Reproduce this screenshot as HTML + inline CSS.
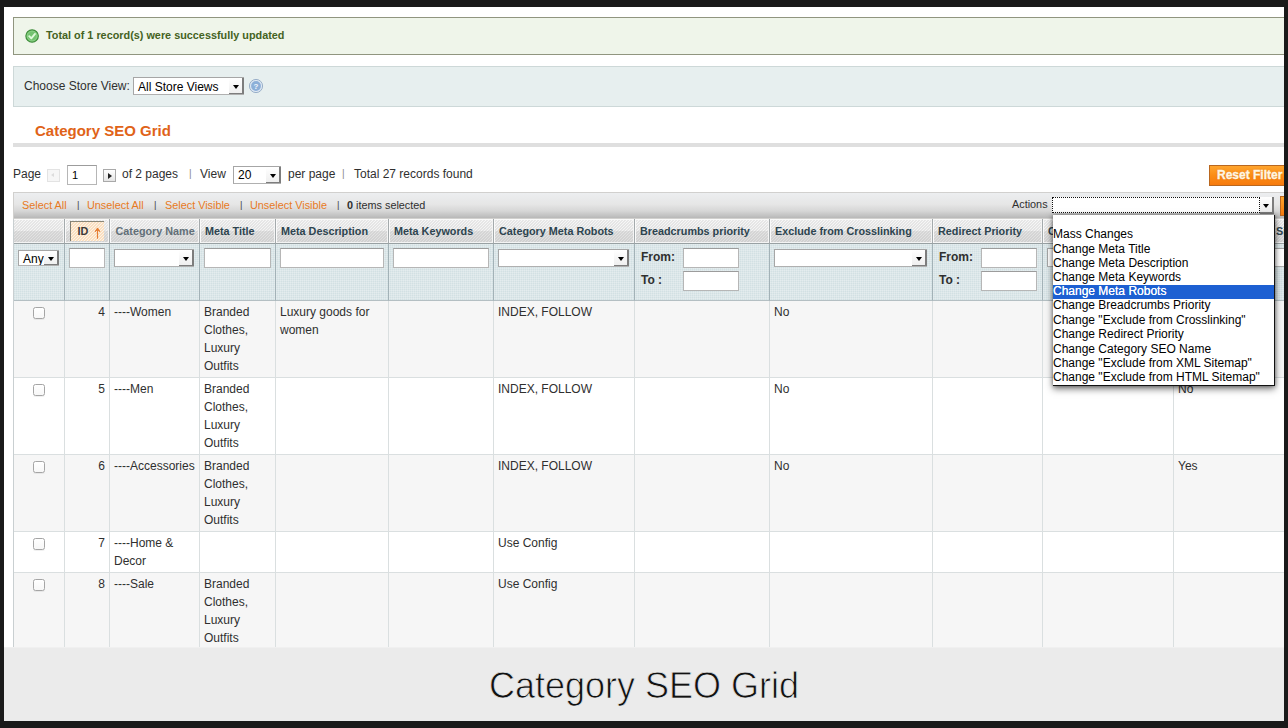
<!DOCTYPE html>
<html lang="en">
<head>
<meta charset="utf-8">
<title>Category SEO Grid</title>
<style>
*{box-sizing:border-box;}
html,body{margin:0;padding:0;}
body{width:1288px;height:728px;overflow:hidden;background:#1a1a1a;position:relative;font-family:"Liberation Sans",sans-serif;font-size:12px;color:#2f2f2f;line-height:18px;}
#page{position:absolute;left:4px;top:7px;width:1280px;height:714px;background:#fff;overflow:hidden;}
/* everything inside #inner uses full-page coordinates */
#inner{position:absolute;left:-4px;top:-7px;width:1400px;height:728px;}
.abs{position:absolute;white-space:nowrap;}
/* message */
#msg{left:13px;top:17px;width:1380px;height:38px;border:1px solid #90957f;background:#eff5ea;}
#msg .txt{left:32px;top:8px;font-weight:bold;font-size:10.85px;color:#446222;line-height:18px;}
/* store switcher */
#store{left:13px;top:66px;width:1380px;height:41px;border:1px solid #cdd8d8;background:#e7efef;}
.sel{position:absolute;background:#fff;border:1px solid #a6a6a6;border-right:0;border-bottom-color:#b0b0b0;font-size:12px;line-height:17px;color:#000;padding-left:4px;white-space:nowrap;overflow:hidden;}
.sel i{position:absolute;right:0;top:0;bottom:-1px;width:15px;background:linear-gradient(#ffffff,#efefef);border-right:2px solid #7d7d7d;border-bottom:2px solid #7d7d7d;}
.sel i:after{content:"";position:absolute;left:4px;top:50%;margin-top:-1px;border:3px solid transparent;border-top:4px solid #000;border-bottom:0;}
.inp{position:absolute;background:#fff;border:1px solid #b6b6b6;border-top-color:#9c9c9c;}
/* heading */
#h3{left:35px;top:121px;font-weight:bold;font-size:15px;color:#e06318;line-height:20px;}
#hr{left:13px;top:143px;width:1380px;height:4px;background:#dfdfdf;}
/* pager */
.pg{top:165px;line-height:18px;font-size:12px;color:#2f2f2f;}
.sep{color:#8a8a8a;font-size:10px;margin-top:0px;padding-left:1px;}
#reset{left:1209px;top:165px;width:90px;height:21px;border:1px solid #b9671f;background:linear-gradient(#ffa52e 0,#fb8d16 50%,#f67a0d 100%);color:#fff6e2;font-weight:bold;font-size:12px;line-height:18px;padding-left:7px;-webkit-text-stroke:.35px #fff6e2;text-shadow:0 0 2px rgba(200,90,0,.55);}
/* massaction */
#mass{left:13px;top:192px;width:1380px;height:27px;border:1px solid #d1d0ce;background:linear-gradient(#eceef0 0,#e6e6e6 45%,#d6d6d6 72%,#b8b8b8 100%);}
.ml{top:196px;font-size:10.85px;line-height:18px;color:#e87a1e;}
.ml.d{color:#2f2f2f;}
.ml.s{font-size:9.5px;color:#444;padding-left:1px}
/* grid */
#grid{left:13px;top:219px;width:1400px;height:430px;}
#gl{left:13px;top:219px;width:1px;height:430px;background:#c9cfd1;}
.hd{position:absolute;top:0;height:25px;border-right:1px solid #a4aaac;border-bottom:1px solid #98a1a3;
 background:
  repeating-linear-gradient(135deg,rgba(110,110,110,.12) 0,rgba(110,110,110,.12) .8px,rgba(255,255,255,0) .8px,rgba(255,255,255,0) 2.12px),
  linear-gradient(#f8f8f8 0,#f3f3f3 50%,#e4e4e4 52%,#dedede 100%);
 box-shadow:inset 1px 1px 0 #fafafa, inset -1px -1px 0 #f4f4f4;
 font-weight:bold;font-size:10.8px;color:#2d444f;line-height:24px;padding-left:5px;white-space:nowrap;overflow:hidden;}
.hd a{color:#626f78;padding-left:.5px}
.idh{position:absolute;left:5px;top:2px;width:34px;height:20px;border-top:1px solid #8a8778;border-left:1px solid #7d7b72;
 background:repeating-linear-gradient(135deg,#fadfc0 0,#fadfc0 .8px,#fef4e8 .8px,#fef4e8 2.12px);color:#3a3a3a;line-height:19px;padding-left:6.5px;}
.idh svg{position:absolute;left:22px;top:4.5px;}
.fl{position:absolute;top:25px;height:57px;border-right:1px solid #a3b2b7;border-bottom:1px solid #b4bfc3;
 background-color:#d2e0e3;
 background-image:linear-gradient(rgba(255,255,255,.22) 1px,transparent 1px),linear-gradient(90deg,rgba(255,255,255,.22) 1px,transparent 1px);
 background-size:2px 2px;}
.fl b{position:absolute;left:6px;font-size:12px;color:#2f2f2f;line-height:18px;}
.row{position:absolute;left:0;width:1400px;border-bottom:1px solid #dadfe0;}
.row.g{background:#f6f6f6;}
.row.w{background:#fff;}
.c{position:absolute;top:0;bottom:0;border-right:1px solid #dadfe0;padding:2px 4px 2px 4px;font-size:12px;line-height:18px;color:#2f2f2f;overflow:hidden;white-space:normal;}
.cb{position:absolute;left:20px;top:6px;width:12px;height:12px;border:1px solid #a5a5a5;border-radius:2.5px;background:linear-gradient(#ffffff,#f7f7f7);box-shadow:0 1px 0 rgba(0,0,0,.06);}
/* dropdown */
#dd{left:1053px;top:215px;width:222px;height:171px;background:#fff;border-right:1px solid #111;border-bottom:1px solid #111;box-shadow:0 3px 7px rgba(0,0,0,.5),0 0 4px rgba(0,0,0,.4);font-size:12px;color:#000;}
#dd div{position:absolute;left:0;right:0;height:14.4px;line-height:14.4px;padding-left:0;white-space:nowrap;}
#dd div.hl{top:70px;height:14px;background:linear-gradient(#1d60d2,#1d60d2);}
#dd div.on{color:#fff;text-shadow:0 0 .6px #fff;}
/* caption */
#cap{left:4px;top:647px;width:1280px;height:74px;background:linear-gradient(#f0f0f0 0,#f0f0f0 1px,#ebebeb 1px);text-align:center;font-size:36px;line-height:78px;color:#111;-webkit-text-stroke:.75px #ebebeb;}
</style>
</head>
<body>
<div id="page"><div id="inner">

<div id="msg" class="abs">
 <svg class="abs" style="left:11px;top:11px" width="15" height="15" viewBox="0 0 15 15"><circle cx="7.1" cy="7" r="6.2" fill="#74c270" stroke="#3f8c3b" stroke-width="1.2"/><circle cx="7.1" cy="7" r="4.9" fill="none" stroke="#8fd48a" stroke-width="0.8"/><path d="M4.2 7.2l2.1 2.2 3.7-4.5" fill="none" stroke="#e0fadb" stroke-width="1.9" stroke-linecap="round" stroke-linejoin="round"/></svg>
 <span class="abs txt">Total of 1 record(s) were successfully updated</span>
</div>

<div id="store" class="abs">
 <span class="abs" style="left:10px;top:10px;line-height:18px;color:#2f2f2f">Choose Store View:</span>
 <div class="sel" style="left:119px;top:10px;width:111px;height:18px;line-height:18px">All Store Views<i></i></div>
 <svg class="abs" style="left:235px;top:11px" width="16" height="16" viewBox="0 0 16 16"><circle cx="7.0" cy="8.0" r="6.6" fill="#dde7f2" stroke="#91a8c4" stroke-width="0.9"/><circle cx="7.0" cy="8.0" r="4.9" fill="#8cafd8"/><text x="7.0" y="10.9" font-family="Liberation Sans, sans-serif" font-size="8" font-weight="bold" fill="#f0f6fc" text-anchor="middle">?</text></svg>
</div>

<div id="h3" class="abs">Category SEO Grid</div>
<div id="hr" class="abs"></div>

<span class="abs pg" style="left:13px">Page</span>
<div class="abs" style="left:47px;top:169px;width:13px;height:13px;border:1px solid #e3e3e3;background:#f6f6f6;"><span style="position:absolute;left:3px;top:3px;border:2.5px solid transparent;border-right:3px solid #dcdcdc;border-left:0"></span></div>
<div class="inp" style="left:67px;top:165px;width:30px;height:20px;"><span class="abs" style="left:4px;top:0px;line-height:18px;color:#000;font-size:11px">1</span></div>
<div class="abs" style="left:103px;top:169px;width:13px;height:13px;border:1px solid #a9a9a9;background:linear-gradient(#fff,#e4e4e4);"><span style="position:absolute;left:4px;top:2.5px;border:3px solid transparent;border-left:4px solid #222;border-right:0"></span></div>
<span class="abs pg" style="left:122px">of 2 pages</span>
<span class="abs pg sep" style="left:188px">|</span>
<span class="abs pg" style="left:200px">View</span>
<div class="sel" style="left:233px;top:166px;width:48px;height:18px;line-height:17px;padding-left:4px">20<i></i></div>
<span class="abs pg" style="left:288px">per page</span>
<span class="abs pg sep" style="left:341px">|</span>
<span class="abs pg" style="left:354px">Total 27 records found</span>
<div id="reset" class="abs">Reset Filter</div>

<div id="mass" class="abs"></div>
<span class="abs ml" style="left:22px">Select All</span>
<span class="abs ml d s" style="left:76px">|</span>
<span class="abs ml" style="left:87px">Unselect All</span>
<span class="abs ml d s" style="left:153px">|</span>
<span class="abs ml" style="left:165px">Select Visible</span>
<span class="abs ml d s" style="left:239px">|</span>
<span class="abs ml" style="left:250px">Unselect Visible</span>
<span class="abs ml d s" style="left:336px">|</span>
<span class="abs ml d" style="left:347px"><b>0</b> items selected</span>
<span class="abs ml d" style="left:1012px;top:195px">Actions</span>
<div class="abs" style="left:1052px;top:197px;width:222px;height:16px;background:#fff;"><i style="position:absolute;left:0;top:0;width:208px;height:16px;border:1px dotted #111;"></i><i style="position:absolute;right:0;top:0px;height:17px;width:14px;background:linear-gradient(#ffffff,#ececec);border-right:2px solid #7d7d7d;border-bottom:2px solid #7d7d7d;"></i><span style="position:absolute;right:5px;top:7px;border:3px solid transparent;border-top:4px solid #000;border-bottom:0"></span></div>
<div class="abs" style="left:1280px;top:196px;width:30px;height:20px;background:linear-gradient(#ffa52e,#f67a0d);border:1px solid #b9671f;"></div>

<div id="grid" class="abs">
<div class="hd" style="left:0px;width:52px"></div>
<div class="hd" style="left:52px;width:45px;padding:0"><span class="idh">ID<svg width="9" height="12" viewBox="0 0 9 12"><path d="M4.5 11.2V1.6M2.3 4.4L4.5 1.4l2.2 3" fill="none" stroke="#e67e33" stroke-width="1.15" stroke-linecap="round" stroke-linejoin="round"/></svg></span></div>
<div class="hd" style="left:97px;width:90px"><a>Category Name</a></div>
<div class="hd" style="left:187px;width:76px">Meta Title</div>
<div class="hd" style="left:263px;width:113px">Meta Description</div>
<div class="hd" style="left:376px;width:105px">Meta Keywords</div>
<div class="hd" style="left:481px;width:141px">Category Meta Robots</div>
<div class="hd" style="left:622px;width:135px">Breadcrumbs priority</div>
<div class="hd" style="left:757px;width:163px">Exclude from Crosslinking</div>
<div class="hd" style="left:920px;width:110px">Redirect Priority</div>
<div class="hd" style="left:1030px;width:131px">Category SEO Name</div>
<div class="hd" style="left:1161px;width:226px">Exclude from XML Sitemap</div>
<div class="fl" style="left:0px;width:52px"><div class="sel" style="left:5px;top:6px;width:41px;height:16px">Any<i></i></div></div>
<div class="fl" style="left:52px;width:45px"><div class="inp" style="left:4px;top:4px;width:36px;height:20px"></div></div>
<div class="fl" style="left:97px;width:90px"><div class="sel" style="left:4px;top:5px;width:80px;height:18px"><i></i></div></div>
<div class="fl" style="left:187px;width:76px"><div class="inp" style="left:4px;top:4px;width:67px;height:20px"></div></div>
<div class="fl" style="left:263px;width:113px"><div class="inp" style="left:4px;top:4px;width:104px;height:20px"></div></div>
<div class="fl" style="left:376px;width:105px"><div class="inp" style="left:4px;top:4px;width:96px;height:20px"></div></div>
<div class="fl" style="left:481px;width:141px"><div class="sel" style="left:4px;top:5px;width:131px;height:18px"><i></i></div></div>
<div class="fl" style="left:622px;width:135px"><b style="top:4px">From:</b><div class="inp" style="left:48px;top:4px;width:56px;height:20px"></div><b style="top:27px">To :</b><div class="inp" style="left:48px;top:27px;width:56px;height:20px"></div></div>
<div class="fl" style="left:757px;width:163px"><div class="sel" style="left:4px;top:5px;width:153px;height:18px"><i></i></div></div>
<div class="fl" style="left:920px;width:110px"><b style="top:4px">From:</b><div class="inp" style="left:48px;top:4px;width:56px;height:20px"></div><b style="top:27px">To :</b><div class="inp" style="left:48px;top:27px;width:56px;height:20px"></div></div>
<div class="fl" style="left:1030px;width:131px"><div class="sel" style="left:4px;top:4px;width:122px;height:19px"><i></i></div></div>
<div class="fl" style="left:1161px;width:226px"><div class="sel" style="left:4px;top:4px;width:200px;height:19px"><i></i></div></div>
<div class="row g" style="top:82px;height:77px"><div class="c" style="left:0;width:52px"><span class="cb"></span></div><div class="c" style="left:52px;width:45px;text-align:right">4</div><div class="c" style="left:97px;width:90px">----Women</div><div class="c" style="left:187px;width:76px">Branded Clothes, Luxury Outfits</div><div class="c" style="left:263px;width:113px">Luxury goods for women</div><div class="c" style="left:376px;width:105px"></div><div class="c" style="left:481px;width:141px">INDEX, FOLLOW</div><div class="c" style="left:622px;width:135px"></div><div class="c" style="left:757px;width:163px">No</div><div class="c" style="left:920px;width:110px"></div><div class="c" style="left:1030px;width:131px"></div><div class="c" style="left:1161px;width:226px">No</div></div>
<div class="row w" style="top:159px;height:77px"><div class="c" style="left:0;width:52px"><span class="cb"></span></div><div class="c" style="left:52px;width:45px;text-align:right">5</div><div class="c" style="left:97px;width:90px">----Men</div><div class="c" style="left:187px;width:76px">Branded Clothes, Luxury Outfits</div><div class="c" style="left:263px;width:113px"></div><div class="c" style="left:376px;width:105px"></div><div class="c" style="left:481px;width:141px">INDEX, FOLLOW</div><div class="c" style="left:622px;width:135px"></div><div class="c" style="left:757px;width:163px">No</div><div class="c" style="left:920px;width:110px"></div><div class="c" style="left:1030px;width:131px"></div><div class="c" style="left:1161px;width:226px">No</div></div>
<div class="row g" style="top:236px;height:77px"><div class="c" style="left:0;width:52px"><span class="cb"></span></div><div class="c" style="left:52px;width:45px;text-align:right">6</div><div class="c" style="left:97px;width:90px">----Accessories</div><div class="c" style="left:187px;width:76px">Branded Clothes, Luxury Outfits</div><div class="c" style="left:263px;width:113px"></div><div class="c" style="left:376px;width:105px"></div><div class="c" style="left:481px;width:141px">INDEX, FOLLOW</div><div class="c" style="left:622px;width:135px"></div><div class="c" style="left:757px;width:163px">No</div><div class="c" style="left:920px;width:110px"></div><div class="c" style="left:1030px;width:131px"></div><div class="c" style="left:1161px;width:226px">Yes</div></div>
<div class="row w" style="top:313px;height:41px"><div class="c" style="left:0;width:52px"><span class="cb"></span></div><div class="c" style="left:52px;width:45px;text-align:right">7</div><div class="c" style="left:97px;width:90px">----Home &amp; Decor</div><div class="c" style="left:187px;width:76px"></div><div class="c" style="left:263px;width:113px"></div><div class="c" style="left:376px;width:105px"></div><div class="c" style="left:481px;width:141px">Use Config</div><div class="c" style="left:622px;width:135px"></div><div class="c" style="left:757px;width:163px"></div><div class="c" style="left:920px;width:110px"></div><div class="c" style="left:1030px;width:131px"></div><div class="c" style="left:1161px;width:226px"></div></div>
<div class="row g" style="top:354px;height:77px"><div class="c" style="left:0;width:52px"><span class="cb"></span></div><div class="c" style="left:52px;width:45px;text-align:right">8</div><div class="c" style="left:97px;width:90px">----Sale</div><div class="c" style="left:187px;width:76px">Branded Clothes, Luxury Outfits</div><div class="c" style="left:263px;width:113px"></div><div class="c" style="left:376px;width:105px"></div><div class="c" style="left:481px;width:141px">Use Config</div><div class="c" style="left:622px;width:135px"></div><div class="c" style="left:757px;width:163px"></div><div class="c" style="left:920px;width:110px"></div><div class="c" style="left:1030px;width:131px"></div><div class="c" style="left:1161px;width:226px"></div></div>
</div>

<div id="gl" class="abs"></div>
<div id="dd" class="abs">
<div class="hl"></div>
<div style="top:-2px">&nbsp;</div>
<div style="top:12px">Mass Changes</div>
<div style="top:27px">Change Meta Title</div>
<div style="top:41px">Change Meta Description</div>
<div style="top:55px">Change Meta Keywords</div>
<div class="on" style="top:69px">Change Meta Robots</div>
<div style="top:83px">Change Breadcrumbs Priority</div>
<div style="top:98px">Change "Exclude from Crosslinking"</div>
<div style="top:112px">Change Redirect Priority</div>
<div style="top:127px">Change Category SEO Name</div>
<div style="top:141px">Change "Exclude from XML Sitemap"</div>
<div style="top:155px">Change "Exclude from HTML Sitemap"</div>
</div>

<div id="cap" class="abs">Category SEO Grid</div>
</div></div>
</body>
</html>
